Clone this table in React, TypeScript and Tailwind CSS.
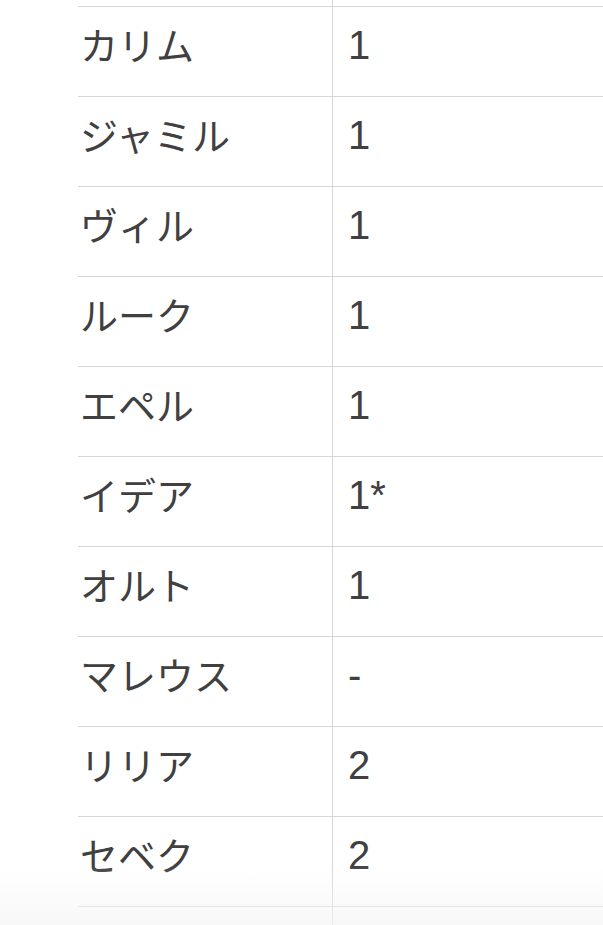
const rows: [string, string][] = [
  ["カリム", "1"],
  ["ジャミル", "1"],
  ["ヴィル", "1"],
  ["ルーク", "1"],
  ["エペル", "1"],
  ["イデア", "1*"],
  ["オルト", "1"],
  ["マレウス", "-"],
  ["リリア", "2"],
  ["セベク", "2"],
];

export default function App() {
  return (
    <div
      className="relative h-[925px] overflow-hidden bg-white text-[#404040]"
      style={{ fontFamily: '"Noto Sans CJK JP", "Noto Sans", sans-serif' }}
    >
      <div className="ml-[78px]">
        {/* tail of the row above */}
        <div className="grid h-[6px] grid-cols-[255px_1fr]">
          <div className="border-r border-[#d6d6d6]" />
          <div />
        </div>

        {rows.map(([name, value]) => (
          <div
            key={name}
            className="grid h-[90px] grid-cols-[255px_1fr] border-t border-[#d6d6d6]"
          >
            <div className="flex items-center border-r border-[#d6d6d6] pb-[16px] pl-[2px] text-[38px] leading-none">
              {name}
            </div>
            <div className="flex items-center pb-[14px] pl-[15px] font-['Liberation_Sans',sans-serif] text-[40px] leading-none">
              {value}
            </div>
          </div>
        ))}

        {/* head of the next row */}
        <div className="grid h-[40px] grid-cols-[255px_1fr] border-t border-[#d6d6d6]">
          <div className="border-r border-[#d6d6d6]" />
          <div />
        </div>
      </div>

      {/* faint shade at the bottom edge */}
      <div className="pointer-events-none absolute inset-x-0 bottom-0 h-[60px] bg-gradient-to-b from-white/0 to-[#f5f5f5]/70" />
    </div>
  );
}
